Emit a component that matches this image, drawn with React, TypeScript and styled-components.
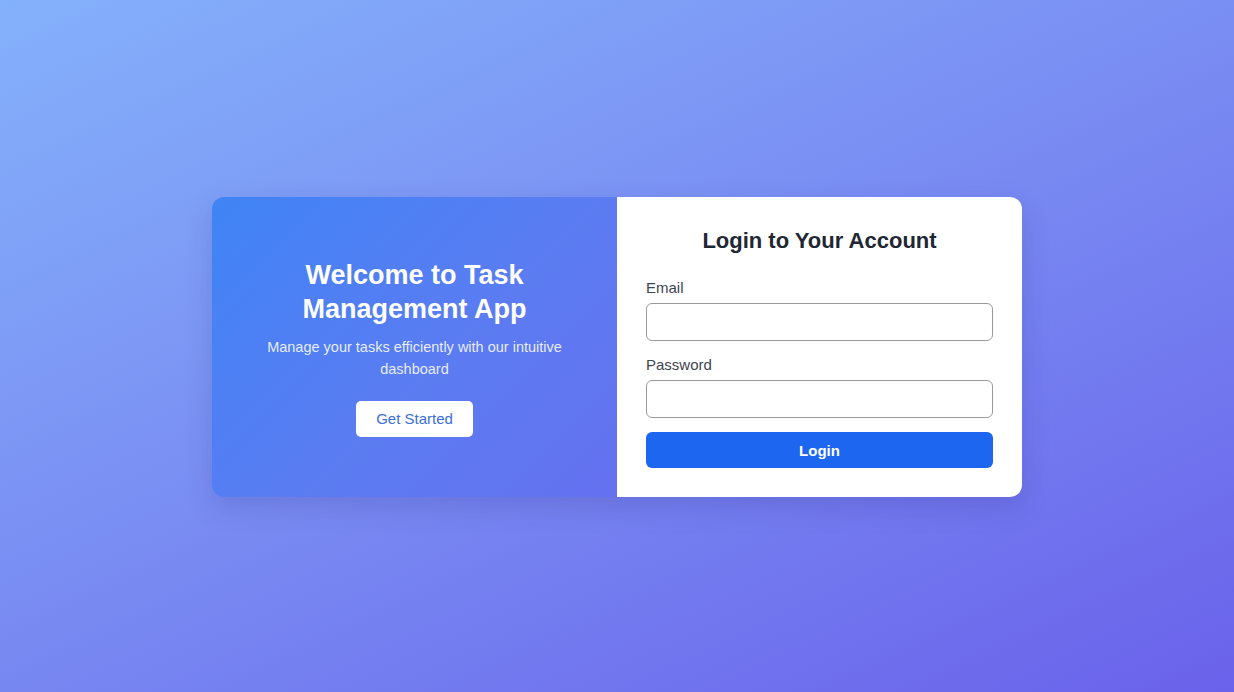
import React from "react";
import styled, { createGlobalStyle } from "styled-components";

const GlobalStyle = createGlobalStyle`
  * { box-sizing: border-box; }
  html, body { margin: 0; padding: 0; }
  body {
    font-family: "Liberation Sans", Arial, sans-serif;
  }
`;

const Page = styled.div`
  width: 100%;
  height: 692px;
  padding-top: 2px;
  display: flex;
  align-items: center;
  justify-content: center;
  background: linear-gradient(155deg, #84b1fb 0%, #7a8ff3 45%, #6a62eb 100%);
`;

const Card = styled.div`
  width: 810px;
  height: 300px;
  display: grid;
  grid-template-columns: 405px 405px;
  border-radius: 12px;
  overflow: hidden;
  box-shadow: 0 10px 28px rgba(40, 40, 120, 0.18);
`;

const Hero = styled.section`
  background: linear-gradient(135deg, #3f84f6 0%, #5b7cf2 55%, #6571f0 100%);
  display: flex;
  flex-direction: column;
  align-items: center;
  justify-content: center;
  padding: 0 40px;
  text-align: center;
  color: #ffffff;
`;

const HeroTitle = styled.h1`
  margin: 0 0 10px;
  font-size: 27px;
  line-height: 34px;
  font-weight: 700;
`;

const HeroText = styled.p`
  margin: 0 0 21px;
  font-size: 14.5px;
  line-height: 22px;
  color: rgba(255, 255, 255, 0.88);
`;

const HeroButton = styled.button`
  width: 117px;
  height: 36px;
  border: none;
  border-radius: 5px;
  background: #ffffff;
  color: #3b6fd6;
  font-family: inherit;
  font-size: 15px;
  cursor: pointer;
`;

const FormPanel = styled.section`
  background: #ffffff;
  padding: 31px 29px 0;
  display: flex;
  flex-direction: column;
`;

const FormTitle = styled.h2`
  margin: 0 0 25px;
  font-size: 22px;
  line-height: 26px;
  font-weight: 700;
  color: #1f2733;
  text-align: center;
`;

const Field = styled.div<{ $mb: number }>`
  display: flex;
  flex-direction: column;
  gap: 6px;
  margin-bottom: ${(p) => p.$mb}px;
`;

const Label = styled.label`
  font-size: 15px;
  line-height: 18px;
  color: #3d4550;
`;

const Input = styled.input`
  height: 38px;
  border: 1px solid #9a9a9a;
  border-radius: 6px;
  padding: 0 10px;
  font-size: 15px;
  font-family: inherit;
  outline: none;
`;

const LoginButton = styled.button`
  height: 36px;
  border: none;
  border-radius: 6px;
  background: #1d67f0;
  color: #ffffff;
  font-family: inherit;
  font-size: 15px;
  font-weight: 700;
  cursor: pointer;
`;

export default function App() {
  return (
    <>
      <GlobalStyle />
      <Page>
        <Card>
          <Hero>
            <HeroTitle>Welcome to Task Management App</HeroTitle>
            <HeroText>Manage your tasks efficiently with our intuitive dashboard</HeroText>
            <HeroButton>Get Started</HeroButton>
          </Hero>
          <FormPanel>
            <FormTitle>Login to Your Account</FormTitle>
            <Field $mb={15}>
              <Label>Email</Label>
              <Input type="email" />
            </Field>
            <Field $mb={14}>
              <Label>Password</Label>
              <Input type="password" />
            </Field>
            <LoginButton>Login</LoginButton>
          </FormPanel>
        </Card>
      </Page>
    </>
  );
}
